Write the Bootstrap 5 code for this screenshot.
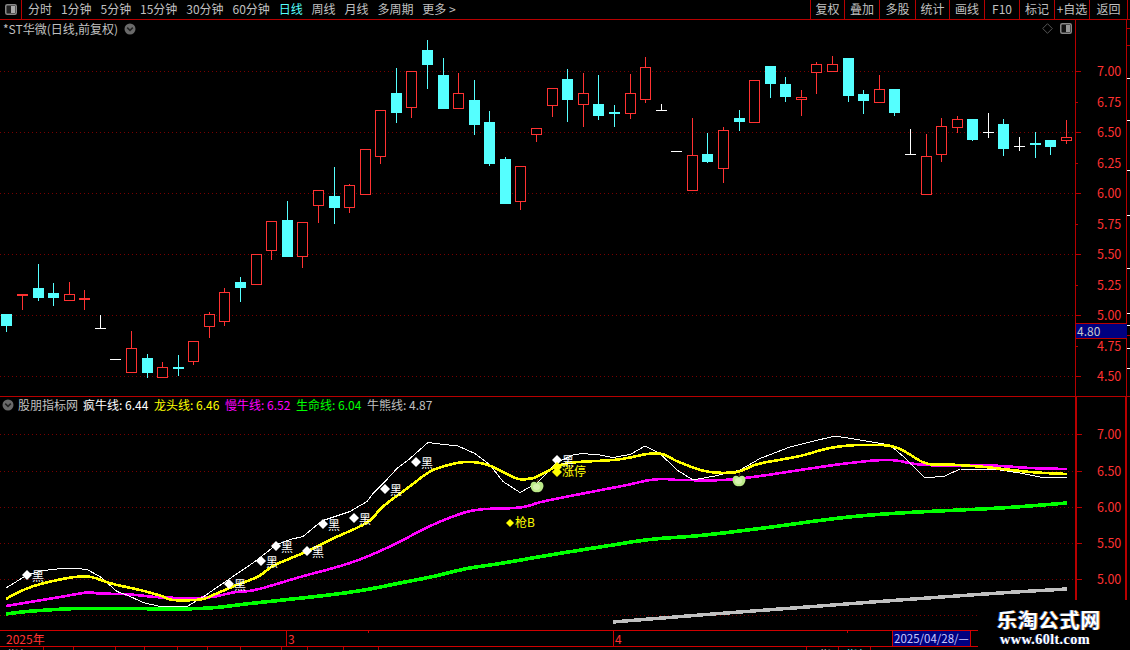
<!DOCTYPE html>
<html lang="zh">
<head>
<meta charset="utf-8">
<title>K线</title>
<link rel="stylesheet" href="https://cdn.jsdelivr.net/npm/bootstrap@5.3.0/dist/css/bootstrap.min.css">
<style>
html,body{background:#000;margin:0;overflow:hidden}
.term{width:1130px;height:650px;background:#000;color:#c0c0c0;font:12px/1 "Noto Sans CJK SC","Liberation Sans",sans-serif;overflow:hidden}
.bar{height:20px;border-bottom:1px solid #b80000;flex:none}
.side-toggle{width:22px;border-right:1px solid #b80000}
.tool{border:0;border-radius:0;background:none;color:#c0c0c0;padding:0;font-size:12px;line-height:18px;white-space:nowrap}
.tool.on{color:#55ffff}
.tools-left{gap:8.9px;padding-left:6px}
.tool-right{height:19px;border-left:1px solid #b80000;font-size:12px;text-align:center;flex:none}
.w34{width:34px}.w35{width:35px}.w36{width:36px}.w38{width:38px}
.edge{width:3px;border-left:1px solid #b80000;height:19px;flex:none}
.pane-main{height:377px;flex:none}
.pane-sub{height:233px;flex:none}
.pane-main svg,.pane-sub svg{display:block}
.head-main{left:3px;top:3px;gap:6px;white-space:nowrap}
.head-tools{left:1042px;top:3px;gap:7px}
.head-sub{left:2px;top:1px;line-height:13px;white-space:nowrap}
.head-sub .nm{margin-left:4px;width:59px}
.leg{width:65px;margin-left:6px;font-size:12px}
.leg-w{color:#fff}.leg-y{color:#ff0}.leg-m{color:#f0f}.leg-g{color:#0f0}.leg-s{color:#c0c0c0}
.axis-chip{left:1076px;top:303px;width:51px;height:16px;background:#000080;color:#c8c8c8;border-top:1px solid #b80000;border-bottom:1px solid #b80000;line-height:14px;padding-left:1px}
.dates{height:17px;width:978px;border-top:1px solid #d00000;border-bottom:1px solid #d00000;flex:none;color:#ff3232;line-height:15px}
.dcell{padding-left:1px;flex:none;height:15px}
.dc1{width:286px;padding-left:6px}
.dc2{width:327px;border-left:1px solid #d00000}
.dc3{width:279px;border-left:1px solid #d00000}
.dc4{width:79px;border-left:1px solid #d00000;border-right:1px solid #d00000;background:#000080;color:#c8c8ff;white-space:nowrap;font-size:11.5px}
.rule-tick{top:0;width:1px;height:2px;background:#d00000}
.tabs{height:3px;overflow:hidden;flex:none;width:978px}
.tab{height:16px;border-right:1px solid #b80000;color:#c0c0c0;line-height:16px;padding-left:7px;flex:none;white-space:nowrap;overflow:hidden}
.tab.cy{color:#55ffff}
.t43{width:44px}.t30{width:30px}.t42{width:42px}.t29{width:29px}.t33{width:33px}.t41{width:41px}.t26{width:26px}.t36{width:36px}.t35{width:35px}.t428{width:428px}.t32{width:32px}
.mark-wm{right:0;bottom:0;width:152px;height:50px;background:#000;text-align:left}
.wm-cn{left:19px;top:10px;font:700 20px/20px "Noto Sans CJK SC",sans-serif;color:#fff;letter-spacing:.8px;white-space:nowrap;text-shadow:-1px 0 0 #2a5bb0,1px 0 0 #b06a20}
.wm-en{left:22px;top:31px;font:700 14.4px/16px "Liberation Serif",serif;color:#fff;white-space:nowrap;letter-spacing:.3px;text-shadow:-1px 0 0 #203a80}
svg text{font-family:"Noto Sans CJK SC","Liberation Sans",sans-serif}
</style>
</head>
<body>
<div class="term d-flex flex-column position-relative">
  <nav class="bar d-flex align-items-stretch">
    <div class="side-toggle d-flex align-items-center justify-content-center flex-none">
      <svg width="12" height="11" viewBox="0 0 12 11"><rect x=".75" y=".75" width="10.5" height="9.5" rx="1.5" fill="#222" stroke="#888" stroke-width="1.5"/><rect x="6" y="2" width="4" height="7" fill="#aaa"/></svg>
    </div>
    <div class="tools-left d-flex flex-grow-1">
      <span class="btn tool">分时</span><span class="btn tool">1分钟</span><span class="btn tool">5分钟</span><span class="btn tool">15分钟</span><span class="btn tool">30分钟</span><span class="btn tool">60分钟</span><span class="btn tool on">日线</span><span class="btn tool">周线</span><span class="btn tool">月线</span><span class="btn tool">多周期</span><span class="btn tool">更多 &gt;</span>
    </div>
    <div class="d-flex">
      <span class="btn tool tool-right w34">复权</span><span class="btn tool tool-right w35">叠加</span><span class="btn tool tool-right w36">多股</span><span class="btn tool tool-right w34">统计</span><span class="btn tool tool-right w35">画线</span><span class="btn tool tool-right w35">F10</span><span class="btn tool tool-right w35">标记</span><span class="btn tool tool-right w35">+自选</span><span class="btn tool tool-right w38">返回</span><span class="edge"></span>
    </div>
  </nav>

  <section class="pane-main position-relative">
    <svg id="mainSvg" width="1130" height="377" viewBox="0 20 1130 377"></svg>
    <div class="head-main position-absolute d-flex align-items-center">
      <span>*ST华微(日线,前复权)</span>
      <svg width="12" height="12" viewBox="0 0 12 12"><circle cx="6" cy="6" r="5.5" fill="#6a6a6a"/><path d="M3.2 4.6 6 7.4 8.8 4.6" fill="none" stroke="#222" stroke-width="1.5"/></svg>
    </div>
    <div class="head-tools position-absolute d-flex align-items-center">
      <svg width="11" height="11" viewBox="0 0 11 11"><path d="M5.5.7 10.3 5.5 5.5 10.3.7 5.5Z" fill="none" stroke="#555"/></svg>
      <svg width="12" height="11" viewBox="0 0 12 11"><rect x=".75" y=".75" width="10.5" height="9.5" rx="1.5" fill="#111" stroke="#888" stroke-width="1.5"/><rect x="6" y="2" width="4" height="7" fill="#999"/></svg>
    </div>
    <div class="axis-chip position-absolute">4.80</div>
  </section>

  <section class="pane-sub position-relative">
    <svg id="subSvg" width="1130" height="233" viewBox="0 397 1130 233"></svg>
    <div class="head-sub position-absolute d-flex align-items-center">
      <svg width="12" height="12" viewBox="0 0 12 12"><circle cx="6" cy="6" r="5.5" fill="#6a6a6a"/><path d="M3.2 4.6 6 7.4 8.8 4.6" fill="none" stroke="#222" stroke-width="1.5"/></svg>
      <span class="nm">股朋指标网</span>
      <span class="leg leg-w">疯牛线: 6.44</span><span class="leg leg-y">龙头线: 6.46</span><span class="leg leg-m">慢牛线: 6.52</span><span class="leg leg-g">生命线: 6.04</span><span class="leg leg-s">牛熊线: 4.87</span>
    </div>
  </section>

  <div class="dates d-flex position-relative">
    <div class="dcell dc1">2025年</div><div class="dcell dc2">3</div><div class="dcell dc3">4</div><div class="dcell dc4">2025/04/28/—</div>
    <i class="rule-tick position-absolute" style="left:368px"></i><i class="rule-tick position-absolute" style="left:847px"></i>
  </div>
  <div class="tabs d-flex">
    <div class="tab t43">指标</div><div class="tab t30">A</div><div class="tab t42"></div><div class="tab t29"></div><div class="tab t33"></div><div class="tab t30"></div><div class="tab t33"></div><div class="tab t41"></div><div class="tab t26"></div><div class="tab t36"></div><div class="tab t35"></div><div class="tab t428"></div><div class="tab t32">&nbsp;&nbsp;指</div><div class="tab t32 cy">指标</div>
  </div>

  <div class="mark-wm position-absolute">
    <div class="wm-cn position-absolute">乐淘公式网</div>
    <div class="wm-en position-absolute">www.60lt.com</div>
  </div>
</div>

<script>
const NS='http://www.w3.org/2000/svg';
function el(p,n,a,t){const e=document.createElementNS(NS,n);for(const k in a)e.setAttribute(k,a[k]);if(t!=null)e.textContent=t;p.appendChild(e);return e}
const RED='#ff3232',CY='#55ffff',WH='#ffffff',AX='#b80000',DOT='#780000';
const m=document.getElementById('mainSvg'),s=document.getElementById('subSvg');
const crisp={'shape-rendering':'crispEdges'};

/* main pane grid and axis */
[[71.5,'7.00',1],[102,'6.75',0],[132.5,'6.50',1],[163,'6.25',0],[193.5,'6.00',1],[224,'5.75',0],[254.5,'5.50',1],[285,'5.25',0],[315.5,'5.00',1],[346.5,'4.75',0],[376.5,'4.50',1]].forEach(([y,t,maj])=>{
  const Y=Math.floor(y)+.5;
  if(maj) el(m,'line',{x1:0,x2:1075,y1:Y,y2:Y,stroke:DOT,'stroke-dasharray':'1 3',...crisp});
  el(m,'line',{x1:1075,x2:maj?1081:1078,y1:Y,y2:Y,stroke:AX,...crisp});
  el(m,'text',{x:1097,y:y+4.5,fill:RED,'font-size':12.5},t);
});
el(m,'line',{x1:1075.5,x2:1075.5,y1:20,y2:397,stroke:AX,...crisp});
el(m,'line',{x1:1126.5,x2:1126.5,y1:20,y2:397,stroke:AX,...crisp});
el(m,'line',{x1:0,x2:1130,y1:396.5,y2:396.5,stroke:AX,...crisp});
[[28,AX],[45,AX],[78,WH],[120,WH],[170,WH],[215,WH],[268,WH],[313,WH],[325,WH],[335,AX],[348,WH],[368,WH]].forEach(([y,c])=>el(m,'line',{x1:1127,x2:1130,y1:y+.5,y2:y+.5,stroke:c,...crisp}));

/* candles: cx, high, top, bottom, low, kind */
const K=[
[6,314,314,325,331,'c'],[22,294,294,294,309,'r'],[38,264,288,297,300,'c'],[53,283,293,297,305,'c'],[69,282,294,300,300,'r'],[84,290,298,298,309,'r'],
[100,315,328,328,328,'w'],[115,359,359,359,359,'w'],[131,331,348,372,372,'r'],[147,354,358,372,377,'c'],[162,362,367,377,377,'r'],[178,355,367,367,375,'c'],
[193,341,341,361,364,'r'],[209,312,314,326,337,'r'],[224,288,292,321,325,'r'],[240,277,282,287,301,'c'],[256,254,254,284,284,'r'],[271,221,221,250,259,'r'],
[287,201,220,256,256,'c'],[302,222,222,256,267,'r'],[318,190,190,205,222,'r'],[334,167,196,207,223,'c'],[349,184,185,207,212,'r'],[365,149,149,194,194,'r'],
[380,110,110,156,163,'r'],[396,68,93,112,122,'c'],[411,71,71,107,117,'r'],[427,40,50,64,88,'c'],[443,58,75,108,108,'c'],[458,73,93,108,108,'r'],
[474,80,100,124,134,'c'],[489,111,122,163,165,'c'],[505,157,159,203,203,'c'],[520,166,166,201,209,'r'],[536,128,128,134,141,'r'],[552,88,88,105,116,'r'],
[567,69,79,99,121,'c'],[583,73,93,104,126,'r'],[598,75,104,115,119,'c'],[614,105,112,112,126,'c'],[630,74,93,113,118,'r'],[645,57,67,99,102,'r'],
[661,104,110,110,110,'w'],[676,151,151,151,151,'w'],[692,118,155,190,190,'r'],[707,133,154,161,162,'c'],[723,127,130,168,182,'r'],[739,110,118,121,130,'c'],
[754,80,80,122,122,'r'],[770,66,66,83,97,'c'],[785,77,84,96,101,'c'],[801,90,97,99,115,'r'],[816,62,64,72,93,'r'],[832,56,64,71,71,'r'],
[848,58,58,95,101,'c'],[863,90,94,100,113,'c'],[879,75,89,102,102,'r'],[894,89,89,112,115,'c'],[910,129,154,154,154,'w'],[926,134,156,194,194,'r'],
[941,118,126,154,161,'r'],[957,116,119,127,132,'r'],[972,119,119,139,140,'c'],[988,113,132,132,137,'w'],[1003,119,124,148,155,'c'],[1019,137,146,146,150,'w'],
[1035,132,143,143,157,'c'],[1050,140,140,146,154,'c'],[1066,120,137,140,143,'r']];
K.forEach(([c,h,t,b,l,k])=>{
  const col=k=='r'?RED:k=='c'?CY:WH;
  el(m,'rect',{x:c,y:h,width:1,height:Math.max(l-h+1,1),fill:col,...crisp});
  if(t==b){el(m,'rect',{x:c-5,y:t,width:11,height:k=='w'?1:2,fill:col,...crisp});return}
  if(k=='c') el(m,'rect',{x:c-5,y:t,width:11,height:b-t+1,fill:col,...crisp});
  else el(m,'rect',{x:c-4.5,y:t+.5,width:10,height:b-t,fill:'#000',stroke:col,...crisp});
});

/* sub pane grid and axis */
[[434.5,'7.00'],[471,'6.50'],[507.5,'6.00'],[543.5,'5.50'],[579.5,'5.00'],[615.5,null]].forEach(([y,t])=>{
  const Y=Math.floor(y)+.5;
  el(s,'line',{x1:0,x2:1075,y1:Y,y2:Y,stroke:DOT,'stroke-dasharray':'1 3',...crisp});
  if(t){el(s,'line',{x1:1076,x2:1082,y1:Y,y2:Y,stroke:AX,...crisp});el(s,'text',{x:1097,y:y+4.5,fill:RED,'font-size':12.5},t)}
});
[1076,1126].forEach(x=>el(s,'rect',{x:x-1,y:397,width:2,height:233,fill:AX,...crisp}));

/* Catmull-Rom resampling keeps averages smooth; the crisp stroke gives the stepped look */
function smooth(p){const o=[];for(let i=0;i<p.length-1;i++){const a=p[Math.max(i-1,0)],b=p[i],c=p[i+1],d=p[Math.min(i+2,p.length-1)];
  for(let j=0;j<6;j++){const t=j/6,t2=t*t,t3=t2*t;o.push([0,1].map(n=>.5*(2*b[n]+(c[n]-a[n])*t+(2*a[n]-5*b[n]+4*c[n]-d[n])*t2+(3*b[n]-a[n]-3*c[n]+d[n])*t3).toFixed(1)*1))}}
  o.push(p[p.length-1]);return o}
function line(pts,col,w,sm=true){const q=sm?smooth(pts):pts;el(s,'polyline',{points:q.map(p=>p.join(',')).join(' '),fill:'none',stroke:col,'stroke-width':w,'stroke-linejoin':'round',...crisp})}
line([[613,622],[700,615],[800,607.5],[900,600],[1000,593],[1067,589]],'#c0c0c0',3.5);
line([[6,614],[33,611],[77,608.5],[120,608.5],[200,608.5],[250,603.5],[283,600],[333,594.5],[367,589.5],[400,583],[433,576.5],[467,568.5],[500,563.5],[550,555],[600,547],[650,539.5],[700,535.5],[760,528.5],[840,518],[900,513],[1000,508],[1067,503]],'#00ff00',3.6);
line([[6,606],[33,601.5],[63,596.5],[87,592.5],[100,593.5],[130,594.5],[163,597.5],[207,597.5],[233,592.5],[257,589.5],[300,577],[350,563],[390,546.5],[427,527.5],[457,515],[480,509.5],[520,507.5],[543,501.5],[583,493.5],[627,485],[647,480.5],[663,479],[680,480],[723,480],[760,476],[800,470],[850,463],[890,460],[925,465],[990,465.5],[1030,468],[1067,469]],'#ff00ff',2.6);
line([[6,588],[27,575],[43,570.5],[62,568.5],[77,568.5],[87,569.5],[100,576.5],[117,591.5],[127,595],[143,602.5],[160,606.5],[187,606.5],[203,597],[230,578.5],[255,561.5],[276,545],[290,539.5],[303,536.5],[315,526.5],[323,520.5],[350,511.5],[367,501.5],[373,493.5],[385,481.5],[397,468.5],[410,458.5],[428,442.5],[440,444],[458,446],[475,453.5],[490,465],[503,481.5],[520,492.5],[537,483],[557,462.5],[573,455],[582,453.5],[600,455],[613,457.5],[630,454.5],[645,446],[660,453.5],[677,470],[693,480],[715,476],[740,470],[760,458.5],[790,447],[810,442],[835,436],[860,440],[890,445],[905,458],[925,478],[945,476],[960,469],[1000,470],[1020,473],[1040,477],[1067,477]],'#ffffff',1,false);
line([[6,599],[20,591.5],[37,585],[60,579.5],[80,576.5],[93,577.5],[113,584],[140,590],[160,595.5],[173,600],[200,599.5],[213,595],[233,586.5],[258,576.5],[272,566.5],[290,558.5],[310,550],[333,538.5],[367,522.5],[383,506.5],[407,488.5],[427,473.5],[440,467.5],[460,462.5],[477,462.5],[493,467],[517,478.5],[530,478.5],[537,476.5],[557,466.5],[573,462.5],[613,460],[630,457.5],[647,454],[662,454],[680,462.5],[707,471.5],[733,472.5],[747,468.5],[760,463.5],[800,456],[830,448],[860,445],[895,447],[925,463],[950,464.5],[985,467],[1030,472],[1067,474]],'#ffff00',2.6);

function dia(x,y,c,r=5){el(s,'path',{d:`M${x} ${y-r}L${x+r} ${y}L${x} ${y+r}L${x-r} ${y}Z`,fill:c})}
[[27,575],[229,584],[261,561],[276,546],[307,551],[323,524],[354,518],[385,489],[416,462],[557,460]].forEach(([x,y])=>{
  dia(x,y,'#fff');el(s,'text',{x:x+5,y:y+5.5,fill:'#fff','font-size':12},'黑');
});
dia(557,467,'#ff0');dia(557,472,'#ff0');
el(s,'text',{x:562,y:476,fill:'#ff0','font-size':12},'涨停');
dia(510,523,'#ff0',4);
el(s,'text',{x:515,y:527,fill:'#ff0','font-size':12},'枪B');
[[537,487],[739,481]].forEach(([x,y])=>{
  el(s,'path',{d:`M${x} ${y-5}L${x+1} ${y-8}`,stroke:'#5a3a10','stroke-width':1.4,fill:'none'});
  el(s,'path',{d:`M${x} ${y-4}C${x+3} ${y-6.5} ${x+6.5} ${y-5} ${x+6.5} ${y-1}C${x+6} ${y+3} ${x+3} ${y+6} ${x} ${y+5}C${x-3} ${y+6} ${x-6} ${y+3} ${x-6.5} ${y-1}C${x-6.5} ${y-5} ${x-3} ${y-6.5} ${x} ${y-4}Z`,fill:'#bdea8a'});
  el(s,'ellipse',{cx:x-.5,cy:y,rx:3.5,ry:3,fill:'#d8f2b0'});
});
</script>
<script src="https://cdn.jsdelivr.net/npm/bootstrap@5.3.0/dist/js/bootstrap.bundle.min.js"></script>
</body>
</html>
